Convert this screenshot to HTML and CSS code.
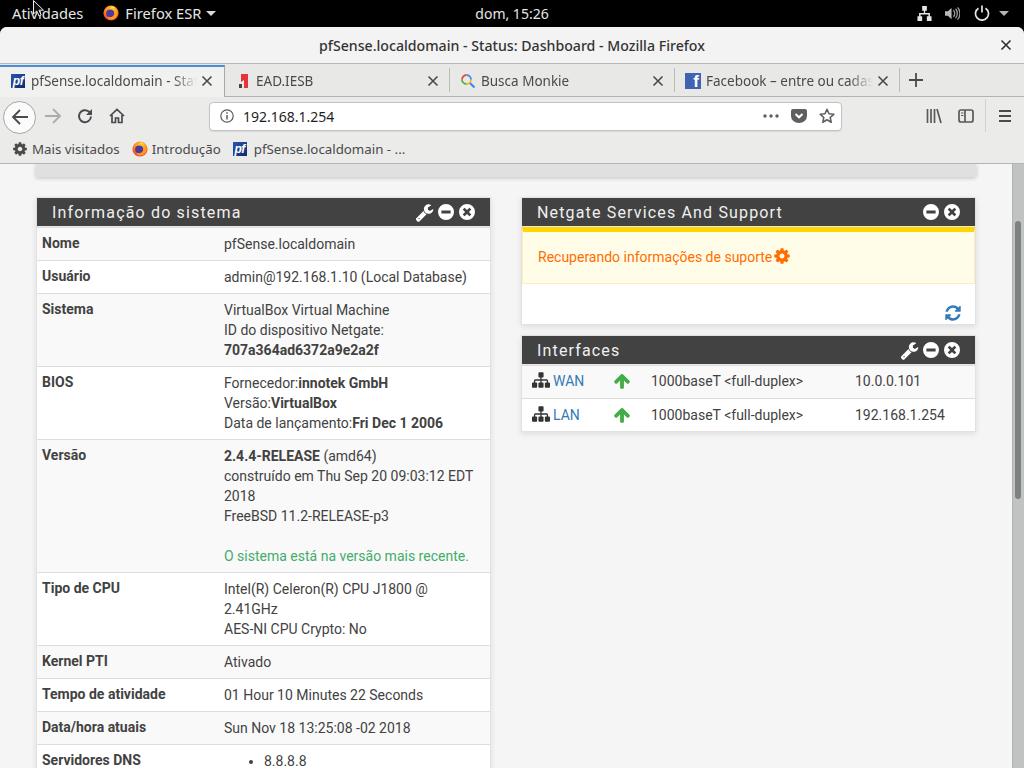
FILE: index.html
```html
<!DOCTYPE html>
<html lang="pt-BR">
<head>
<meta charset="utf-8">
<title>pfSense.localdomain - Status: Dashboard - Mozilla Firefox</title>
<link rel="stylesheet" href="styles.css">
</head>
<body>
<svg class="defs" width="0" height="0" aria-hidden="true">
  <defs>
    <radialGradient id="fxg" cx="0.55" cy="0.3" r="0.8">
      <stop offset="0" stop-color="#ffd83a"/><stop offset="0.5" stop-color="#ff8a1e"/><stop offset="1" stop-color="#e0242d"/>
    </radialGradient>
    <symbol id="fx" viewBox="0 0 16 16">
      <circle cx="8" cy="8" r="7.6" fill="url(#fxg)"/>
      <circle cx="7.2" cy="8.6" r="4.1" fill="#4b3a9c"/>
      <path d="M4.2 11.5c2.5 1.5 6 .8 7-2.2.4-1.4 0-2.8-1-3.8 2.3.6 3.8 2.3 3.8 4.4-.6 2.7-3 4.7-5.8 4.7-1.9 0-3.2-1-4-3.1z" fill="#ff9a1f"/>
      <path d="M8 1.2c2 .2 3.6 1.2 4.6 2.6-1.4-.8-3-.9-4.2-.5z" fill="#ffe14d"/>
    </symbol>
    <symbol id="wrench" viewBox="0 0 1792 1792"><path d="M448 1472q0-26-19-45t-45-19-45 19-19 45 19 45 45 19 45-19 19-45zm644-420l-682 682q-37 37-90 37-52 0-91-37l-106-108q-38-36-38-90 0-53 38-91l681-681q39 98 114.5 173.5t173.5 114.5zm634-435q0 39-23 106-47 134-164.5 217.5t-258.5 83.5q-185 0-316.5-131.5t-131.5-316.5 131.5-316.5 316.5-131.5q58 0 121.5 16.5t107.5 46.5q16 11 16 28t-16 28l-293 169v224l193 107q5-3 79-48.5t135.5-81 70.5-35.5q15 0 23.5 10t8.5 25z"/></symbol>
    <symbol id="minus" viewBox="0 0 16 16"><path fill-rule="evenodd" d="M8 0a8 8 0 1 1 0 16A8 8 0 0 1 8 0zM3.4 6.5v3h9.2v-3z"/></symbol>
    <symbol id="times" viewBox="0 0 16 16"><path fill-rule="evenodd" d="M8 0a8 8 0 1 1 0 16A8 8 0 0 1 8 0zM5.6 3.7 3.7 5.6 6.1 8l-2.4 2.4 1.9 1.9L8 9.9l2.4 2.4 1.9-1.9L9.9 8l2.4-2.4-1.9-1.9L8 6.1z"/></symbol>
    <symbol id="refresh" viewBox="0 0 1792 1792"><path d="M1639 1056q0 5-1 7-64 268-268 434.5t-478 166.5q-146 0-282.5-55t-243.5-157l-129 129q-19 19-45 19t-45-19-19-45v-448q0-26 19-45t45-19h448q26 0 45 19t19 45-19 45l-137 137q71 66 161 102t187 36q134 0 250-65t186-179q11-17 53-117 8-23 30-23h192q13 0 22.5 9.5t9.5 22.5zm25-800v448q0 26-19 45t-45 19h-448q-26 0-45-19t-19-45 19-45l138-138q-148-137-349-137-134 0-250 65t-186 179q-11 17-53 117-8 23-30 23h-199q-13 0-22.5-9.5t-9.5-22.5v-7q65-268 270-434.5t480-166.5q146 0 284 55.5t245 156.5l130-129q19-19 45-19t45 19 19 45z"/></symbol>
    <symbol id="sitemap" viewBox="0 0 1792 1792"><path d="M1792 1248v320q0 40-28 68t-68 28h-320q-40 0-68-28t-28-68v-320q0-40 28-68t68-28h96v-192h-512v192h96q40 0 68 28t28 68v320q0 40-28 68t-68 28h-320q-40 0-68-28t-28-68v-320q0-40 28-68t68-28h96v-192h-512v192h96q40 0 68 28t28 68v320q0 40-28 68t-68 28h-320q-40 0-68-28t-28-68v-320q0-40 28-68t68-28h96v-192q0-52 38-90t90-38h512v-192h-96q-40 0-68-28t-28-68v-320q0-40 28-68t68-28h320q40 0 68 28t28 68v320q0 40-28 68t-68 28h-96v192h512q52 0 90 38t38 90v192h96q40 0 68 28t28 68z"/></symbol>
    <symbol id="arrowup" viewBox="0 0 1792 1792"><path d="M1675 971q0 51-37 90l-75 75q-38 38-91 38-54 0-90-38l-294-293v704q0 52-37.5 84.5t-90.5 32.5h-128q-53 0-90.5-32.5t-37.5-84.5v-704l-294 293q-36 38-90 38t-90-38l-75-75q-38-38-38-90 0-53 38-91l651-651q35-37 90-37 54 0 91 37l651 651q37 39 37 91z"/></symbol>
    <symbol id="cog" viewBox="0 0 1792 1792"><path d="M1152 896q0-106-75-181t-181-75-181 75-75 181 75 181 181 75 181-75 75-181zm512-109v222q0 12-8 23t-20 13l-185 28q-19 54-39 91 35 50 107 138 10 12 10 25t-9 23q-27 37-99 108t-94 71q-12 0-26-9l-138-108q-44 23-91 38-16 136-29 186-7 28-36 28h-222q-14 0-24.5-8.5t-11.5-21.5l-28-184q-49-16-90-37l-141 107q-10 9-25 9-14 0-25-11-126-114-165-168-7-10-7-23 0-12 8-23 15-21 51-66.5t54-70.5q-27-50-41-99l-183-27q-13-2-21-12.5t-8-23.5v-222q0-12 8-23t19-13l186-28q14-46 39-92-40-57-107-138-10-12-10-24 0-10 9-23 26-36 98.5-107.5t94.5-71.5q13 0 26 10l138 107q44-23 91-38 16-136 29-186 7-28 36-28h222q14 0 24.5 8.5t11.5 21.5l28 184q49 16 90 37l142-107q9-9 24-9 13 0 25 10 129 119 165 170 7 8 7 22 0 12-8 23-15 21-51 66.5t-54 70.5q26 50 41 98l183 28q13 2 21 12.5t8 23.5z"/></symbol>
    <symbol id="close" viewBox="0 0 12 12"><path d="M1.5 1.5l9 9M10.5 1.5l-9 9" fill="none" stroke="currentColor" stroke-width="1.6"/></symbol>
  </defs>
</svg>

<header class="topbar">
  <div class="top-left">
    <span class="top-label">Atividades</span>
    <span class="top-app">
      <svg class="ic16"><use href="#fx"/></svg>
      <span class="top-label">Firefox ESR</span>
      <span class="caret"></span>
    </span>
  </div>
  <span class="clock">dom, 15:26</span>
  <div class="top-right">
    <svg class="net" viewBox="0 0 16 16"><path d="M5.5 0h5v5H8.700v2.500h5.100V11H15.500v5h-5v-5h1.700V9H3.800v2h1.700v5h-5v-5h1.700V7.500h5.100V5H5.500z" fill="#e6e6e6"/></svg>
    <svg class="vol" viewBox="0 0 16 16"><path d="M0 5.500h3L7 2v12l-4-3.500H0z" fill="#b9b9b9"/><path d="M9 4.500c1.800 1.800 1.800 5.200 0 7M11.200 3c2.600 2.600 2.600 7.400 0 10M13.400 1.500c3.400 3.500 3.400 9.500 0 13" fill="none" stroke="#9a9a9a" stroke-width="1.400"/></svg>
    <svg class="pow" viewBox="0 0 16 16"><path d="M4.500 3.200a6.500 6.500 0 1 0 7 0M8 .5v7" fill="none" stroke="#e6e6e6" stroke-width="1.700"/></svg>
    <span class="caret caret-dim"></span>
  </div>
</header>

<div class="window">
  <div class="titlebar">
    <span class="title">pfSense.localdomain - Status: Dashboard - Mozilla Firefox</span>
    <svg class="win-close"><use href="#close"/></svg>
  </div>

  <div class="tabs">
    <div class="tab tab-active">
      <span class="fav"><span class="pf">pf</span></span>
      <span class="tab-label">pfSense.localdomain - Status</span>
      <svg class="tab-close"><use href="#close"/></svg>
    </div>
    <div class="tab">
      <span class="fav"><svg class="ic16" viewBox="0 0 16 16"><path d="M6 1h7v14H9V7L6 9z" fill="#e4343f"/><rect x="4" y="11" width="3" height="4" fill="#444"/></svg></span>
      <span class="tab-label">EAD.IESB</span>
      <svg class="tab-close"><use href="#close"/></svg>
    </div>
    <div class="tab">
      <span class="fav"><svg class="ic16" viewBox="0 0 16 16"><path d="M6.500 2a4.500 4.500 0 0 0-4.500 4.500" fill="none" stroke="#e8453c" stroke-width="1.800"/><path d="M2 6.500A4.500 4.500 0 0 0 6.500 11" fill="none" stroke="#4caf50" stroke-width="1.800"/><path d="M6.500 11A4.500 4.500 0 0 0 11 6.500" fill="none" stroke="#fbbc05" stroke-width="1.800"/><path d="M11 6.500A4.500 4.500 0 0 0 6.500 2" fill="none" stroke="#4285f4" stroke-width="1.800"/><path d="M10 10l4.500 4.500" stroke="#4285f4" stroke-width="2.200"/></svg></span>
      <span class="tab-label">Busca Monkie</span>
      <svg class="tab-close"><use href="#close"/></svg>
    </div>
    <div class="tab">
      <span class="fav fav-fb"><span class="fb">f</span></span>
      <span class="tab-label">Facebook – entre ou cadastre-se</span>
      <svg class="tab-close"><use href="#close"/></svg>
    </div>
    <svg class="newtab" viewBox="0 0 14 14"><path d="M7 0v14M0 7h14" stroke="#4a4a4a" stroke-width="1.800"/></svg>
  </div>

  <nav class="navbar">
    <span class="btn btn-back"><svg class="ic18" viewBox="0 0 18 18"><path d="M17 9H2M9 2 2 9l7 7" fill="none" stroke="#4a4a4f" stroke-width="1.800"/></svg></span>
    <span class="btn"><svg class="ic18" viewBox="0 0 18 18"><path d="M1 9h15M9 2l7 7-7 7" fill="none" stroke="#acacac" stroke-width="1.800"/></svg></span>
    <span class="btn"><svg class="ic16" viewBox="0 0 16 16"><path d="M14 8.500A6 6 0 1 1 11.800 3.500L14 5.500" fill="none" stroke="#4a4a4f" stroke-width="2"/><path d="M15 1v6H9z" fill="#4a4a4f"/></svg></span>
    <span class="btn"><svg class="ic16" viewBox="0 0 16 16"><path d="M1 8 8 1.500 15 8M3 7v7.500h3.500V10h3v4.500H13V7" fill="none" stroke="#4a4a4f" stroke-width="1.700"/></svg></span>
    <div class="urlbar">
      <svg class="ic14" viewBox="0 0 14 14"><circle cx="7" cy="7" r="6.200" fill="none" stroke="#5a5a5a" stroke-width="1.200"/><path d="M7 6v4.500M7 3.200v1.500" stroke="#5a5a5a" stroke-width="1.500"/></svg>
      <span class="url">192.168.1.254</span>
      <div class="url-actions">
        <svg class="dots" viewBox="0 0 16 4"><circle cx="2" cy="2" r="1.700"/><circle cx="8" cy="2" r="1.700"/><circle cx="14" cy="2" r="1.700"/></svg>
        <svg class="ic16" viewBox="0 0 16 16"><path d="M2 1h12a2 2 0 0 1 2 2v5a8 7 0 0 1-16 0V3a2 2 0 0 1 2-2z" fill="#5f5f5f"/><path d="M4.500 6 8 9.300 11.500 6" fill="none" stroke="#fff" stroke-width="2"/></svg>
        <svg class="ic16" viewBox="0 0 16 16"><path d="M8 1.300l2 4.500 4.800.5-3.600 3.200 1 4.800L8 11.800l-4.200 2.500 1-4.800L1.200 6.300 6 5.800z" fill="none" stroke="#5f5f5f" stroke-width="1.600" stroke-linejoin="round"/></svg>
      </div>
    </div>
    <div class="nav-right">
      <span class="btn"><svg class="ic16" viewBox="0 0 16 16"><path d="M1.500 1v14M5 1v14M8.500 1v14M11 1l4 14" fill="none" stroke="#5a5a5a" stroke-width="1.700"/></svg></span>
      <span class="btn"><svg class="ic16" viewBox="0 0 16 16"><rect x="1" y="2" width="14" height="12" rx="2" fill="none" stroke="#5a5a5a" stroke-width="1.700"/><path d="M7 2v12" stroke="#5a5a5a" stroke-width="1.700"/><path d="M3 5h2.500M3 7.500h2.500" stroke="#5a5a5a" stroke-width="1"/></svg></span>
      <span class="nav-sep"></span>
      <span class="btn"><svg class="ic16" viewBox="0 0 16 16"><path d="M2 3h12M2 8h12M2 13h12" stroke="#4a4a4f" stroke-width="1.800"/></svg></span>
    </div>
  </nav>

  <div class="bookmarks">
    <span class="bm bm-gear"><svg class="gear"><use href="#cog"/></svg>Mais visitados</span>
    <span class="bm"><svg class="ic16"><use href="#fx"/></svg>Introdução</span>
    <span class="bm bm-pf"><span class="fav-small"><span class="pf">pf</span></span>pfSense.localdomain - ...</span>
  </div>

  <div class="viewport">
    <main class="page">
      <div class="topcard"></div>
      <div class="columns">
        <section class="panel">
          <div class="panel-head">
            <h2>Informação do sistema</h2>
            <div class="head-icons">
              <svg class="wr"><use href="#wrench"/></svg>
              <svg class="hi"><use href="#minus"/></svg>
              <svg class="hi"><use href="#times"/></svg>
            </div>
          </div>
          <table class="info">
            <tbody>
              <tr><th>Nome</th><td>pfSense.localdomain</td></tr>
              <tr><th>Usuário</th><td>admin@192.168.1.10 (Local Database)</td></tr>
              <tr><th>Sistema</th><td>VirtualBox Virtual Machine<br>ID do dispositivo Netgate:<br><b>707a364ad6372a9e2a2f</b></td></tr>
              <tr><th>BIOS</th><td>Fornecedor:<b>innotek GmbH</b><br>Versão:<b>VirtualBox</b><br>Data de lançamento:<b>Fri Dec 1 2006</b></td></tr>
              <tr><th>Versão</th><td><b>2.4.4-RELEASE</b> (amd64)<br>construído em Thu Sep 20 09:03:12 EDT 2018<br>FreeBSD 11.2-RELEASE-p3<br><br><span class="ok">O sistema está na versão mais recente.</span></td></tr>
              <tr><th>Tipo de CPU</th><td>Intel(R) Celeron(R) CPU J1800 @ 2.41GHz<br>AES-NI CPU Crypto: No</td></tr>
              <tr><th>Kernel PTI</th><td>Ativado</td></tr>
              <tr><th>Tempo de atividade</th><td>01 Hour 10 Minutes 22 Seconds</td></tr>
              <tr><th>Data/hora atuais</th><td>Sun Nov 18 13:25:08 -02 2018</td></tr>
              <tr><th>Servidores DNS</th><td><ul class="dns"><li>8.8.8.8</li><li>8.8.4.4</li></ul></td></tr>
            </tbody>
          </table>
        </section>

        <div class="col-right">
          <section class="panel">
            <div class="panel-head">
              <h2>Netgate Services And Support</h2>
              <div class="head-icons">
                <svg class="hi"><use href="#minus"/></svg>
                <svg class="hi"><use href="#times"/></svg>
              </div>
            </div>
            <div class="alert">Recuperando informações de suporte<svg class="alert-cog"><use href="#cog"/></svg></div>
            <div class="panel-foot"><svg class="refresh"><use href="#refresh"/></svg></div>
          </section>

          <section class="panel">
            <div class="panel-head">
              <h2>Interfaces</h2>
              <div class="head-icons">
                <svg class="wr"><use href="#wrench"/></svg>
                <svg class="hi"><use href="#minus"/></svg>
                <svg class="hi"><use href="#times"/></svg>
              </div>
            </div>
            <table class="ifaces">
              <tbody>
                <tr>
                  <td class="c-name"><svg class="sitemap"><use href="#sitemap"/></svg><a class="link">WAN</a></td>
                  <td class="c-up"><svg class="up"><use href="#arrowup"/></svg></td>
                  <td class="c-media">1000baseT &lt;full-duplex&gt;</td>
                  <td>10.0.0.101</td>
                </tr>
                <tr>
                  <td class="c-name"><svg class="sitemap"><use href="#sitemap"/></svg><a class="link">LAN</a></td>
                  <td class="c-up"><svg class="up"><use href="#arrowup"/></svg></td>
                  <td class="c-media">1000baseT &lt;full-duplex&gt;</td>
                  <td>192.168.1.254</td>
                </tr>
              </tbody>
            </table>
          </section>
        </div>
      </div>
    </main>
    <div class="scrollbar"><span class="thumb"></span></div>
  </div>
</div>

<svg class="cursor" viewBox="0 0 12 17"><path d="M.5.5v13.500l3.200-3 2.300 5 2.200-1-2.200-4.800h4.500z" fill="#111" stroke="#eee" stroke-width="1"/></svg>
</body>
</html>
```

FILE: styles.css
```css
* { box-sizing: border-box; }
html, body { margin: 0; height: 100%; }
body {
  position: relative;
  display: flex;
  flex-direction: column;
  width: 1024px;
  height: 768px;
  overflow: hidden;
  background: #000;
  font-family: "Noto Sans", "Liberation Sans", sans-serif;
  font-size: 14px;
  color: #3d3d3d;
}
.defs { position: absolute; }
svg { display: block; flex: none; }
.ic14 { width: 14px; height: 14px; }
.ic16 { width: 16px; height: 16px; }
.ic18 { width: 18px; height: 18px; }

/* GNOME top bar */
.topbar {
  position: relative;
  flex: none;
  display: flex;
  align-items: center;
  justify-content: space-between;
  height: 27px;
  padding: 0 15px 1px 12px;
  background: #000;
  color: #e6e6e6;
}
.top-left { display: flex; align-items: center; gap: 20px; }
.top-app { display: flex; align-items: center; gap: 6px; }
.top-label { font-size: 14.7px; line-height: 19px; }
.caret {
  width: 0;
  height: 0;
  border: 5px solid transparent;
  border-top: 5px solid #d8d8d8;
  border-bottom: 0;
}
.top-app .caret { margin-left: -1px; }
.caret-dim { border-top-color: #b5b5b5; }
.clock { position: absolute; left: 0; right: 0; text-align: center; }
.top-right { display: flex; align-items: center; }
.net { width: 15px; height: 15px; margin-right: 13px; }
.vol { width: 15px; height: 15px; margin-right: 14px; }
.pow { width: 16px; height: 16px; margin-right: 9px; }

/* Firefox window */
.window {
  flex: 1;
  min-height: 0;
  display: flex;
  flex-direction: column;
  border-radius: 7px 7px 0 0;
  overflow: hidden;
  background: #f2f2f2;
}
.titlebar {
  position: relative;
  flex: none;
  display: flex;
  align-items: center;
  justify-content: center;
  height: 37px;
  border-bottom: 1px solid #b7b7b5;
  background: #f3f3f3;
}
.title { font-weight: 500; font-size: 14.15px; color: #333; }
.win-close {
  position: absolute;
  right: 12px;
  top: 12px;
  width: 12px;
  height: 12px;
  color: #2e2e2e;
}
.tabs {
  flex: none;
  display: flex;
  align-items: flex-end;
  height: 33px;
  border-bottom: 1px solid #b3b3b1;
  background: #e8e8e7;
  font-size: 13.5px;
}
.tab {
  position: relative;
  flex: none;
  display: flex;
  align-items: center;
  width: 225px;
  height: 32px;
  padding: 2px 11px 0 10px;
  color: #4a4a4a;
}
.tab::after {
  content: "";
  position: absolute;
  right: 0;
  top: 4px;
  bottom: 4px;
  width: 1px;
  background: #bcbcba;
}
.tab-active {
  margin-bottom: -1px;
  padding-top: 0;
  padding-bottom: 2px;
  background: #f1f1f0;
  border-top: 2px solid #4a90d9;
  border-right: 1px solid #a8a8a6;
}
.tab-active::after { display: none; }
.fav {
  flex: none;
  display: flex;
  align-items: center;
  justify-content: center;
  width: 16px;
  height: 16px;
  margin-right: 5px;
}
.pf {
  display: block;
  width: 14px;
  height: 14px;
  background: linear-gradient(135deg, #2a56b0, #0f2a70);
  color: #fff;
  font-family: "Liberation Sans", sans-serif;
  font-style: italic;
  font-weight: 700;
  font-size: 12px;
  line-height: 14px;
  text-align: center;
  letter-spacing: -0.5px;
}
.fav-fb { background: #3f63b0; overflow: hidden; align-items: flex-end; justify-content: flex-end; }
.fb {
  padding-right: 2px;
  color: #fff;
  font-family: "Liberation Sans", sans-serif;
  font-weight: 700;
  font-size: 17px;
  line-height: 15px;
}
.tab-label {
  flex: 1;
  min-width: 0;
  overflow: hidden;
  white-space: nowrap;
  -webkit-mask-image: linear-gradient(to right, #000 calc(100% - 28px), transparent calc(100% - 4px));
  mask-image: linear-gradient(to right, #000 calc(100% - 28px), transparent calc(100% - 4px));
}
.tab-close { width: 12px; height: 12px; color: #4a4a4a; }
.newtab { width: 14px; height: 14px; margin: 0 0 9px 9px; }

.navbar {
  flex: none;
  display: flex;
  align-items: center;
  height: 37px;
  padding-left: 3px;
  background: #ebebea;
}
.btn {
  flex: none;
  display: flex;
  align-items: center;
  justify-content: center;
  width: 32px;
  height: 32px;
}
.btn-back {
  width: 33px;
  height: 33px;
  margin: 3px 1px 0 0;
  border: 1px solid #a5a5a5;
  border-radius: 50%;
  background: #fbfbfb;
}
.urlbar {
  flex: none;
  display: flex;
  align-items: center;
  width: 633px;
  height: 29px;
  margin: 1px 0 0 76px;
  padding: 0 6px 0 10px;
  border: 1px solid #c2c2c0;
  border-radius: 4px;
  background: #fff;
  box-shadow: 0 1px 1px rgba(0,0,0,.08);
}
.url { margin-left: 9px; color: #1f1f1f; }
.url-actions { margin-left: auto; display: flex; align-items: center; gap: 12px; }
.dots { width: 16px; height: 4px; fill: #5f5f5f; }
.nav-right { margin-left: auto; display: flex; align-items: center; padding-right: 3px; }
.nav-sep { width: 1px; height: 33px; margin: 0 3px; background: #d2d2d0; }

.bookmarks {
  flex: none;
  display: flex;
  align-items: center;
  gap: 12px;
  height: 30px;
  padding: 1px 0 0 12px;
  border-bottom: 1px solid #b3b3b1;
  background: #ebebea;
  color: #4a4a4a;
  font-size: 13.3px;
}
.bm { display: flex; align-items: center; gap: 4px; white-space: nowrap; }
.bm-gear { gap: 4px; }
.bm-pf { gap: 7px; }
.gear { width: 16px; height: 16px; fill: #4a4a4a; }
.fav-small { display: block; }

/* pfSense dashboard */
.viewport { flex: 1; min-height: 0; display: flex; overflow: hidden; background: #f5f5f5; }
.page {
  flex: 1;
  min-width: 0;
  padding: 0 36px;
  font-family: Roboto, "Liberation Sans", sans-serif;
  font-size: 14px;
  line-height: 20px;
  color: #424242;
}
.topcard {
  height: 13px;
  background: #e0e0e0;
  box-shadow: 0 1px 4px rgba(0,0,0,.22);
}
.columns {
  display: flex;
  align-items: flex-start;
  gap: 30px;
  margin-top: 20px;
}
.columns > * { flex: none; width: 455px; }
.col-right { display: flex; flex-direction: column; gap: 10px; }
.panel {
  border: 1px solid #e2e2e2;
  background: #fff;
  box-shadow: 0 2px 6px rgba(0,0,0,.1);
}
.panel-head {
  display: flex;
  align-items: center;
  justify-content: space-between;
  height: 29px;
  padding: 0 15px;
  border-bottom: 1px solid #e8e8e8;
  background: #424242;
  color: #fff;
}
.panel-head h2 {
  margin: 1px 0 0;
  font-size: 16px;
  font-weight: 400;
  letter-spacing: 1.16px;
  color: #f0f0f0;
}
.head-icons { display: flex; align-items: center; gap: 5px; }
.hi { width: 16px; height: 16px; fill: #fff; }
.wr { width: 19px; height: 19px; margin-right: -1px; fill: #fff; }

.info, .ifaces { width: 100%; border-collapse: separate; border-spacing: 0; table-layout: fixed; }
.info th, .info td {
  padding: 6px;
  border-top: 1px solid #ddd;
  vertical-align: top;
  text-align: left;
}
.info th { width: 181px; padding: 5px 6px 7px 5px; font-weight: 700; }
.info tr:nth-child(odd), .ifaces tr:nth-child(odd) { background: #f9f9f9; }
.ok { color: #43ac6a; }
.dns { margin: 0; padding-left: 40px; }

.alert {
  height: 57px;
  padding: 15px 15px 0;
  border: 1px solid #ffeeba;
  border-top: 5px solid #ffd600;
  background: #fffde7;
  color: #ff6d00;
  display: flex;
  align-items: flex-start;
}
.alert-cog { width: 18px; height: 18px; margin: 0 0 0 1px; fill: #ff6d00; }
.panel-foot {
  display: flex;
  justify-content: flex-end;
  height: 40px;
  padding: 20px 13px 0 0;
}
.refresh { width: 18px; height: 18px; fill: #337ab7; }

.ifaces td {
  padding: 6px 10px;
  border-top: 1px solid #ddd;
  white-space: nowrap;
}
.ifaces tr:first-child td { padding: 5px 10px 7px; }
.c-name { width: 81px; }
.c-up { width: 38px; }
.c-media { width: 204px; }
.sitemap { display: inline-block; vertical-align: -3px; width: 18px; height: 18px; margin-right: 3px; fill: #333; }
.link { color: #337ab7; }
.up { width: 18px; height: 18px; fill: #43ac47; }

.scrollbar {
  position: relative;
  flex: none;
  width: 12px;
  border-left: 1px solid #b3b3b1;
  background: #c1c2c2;
}
.thumb {
  position: absolute;
  left: 2px;
  top: 57px;
  width: 6px;
  height: 278px;
  border-radius: 3px;
  background: #7d8181;
}
.cursor { position: absolute; left: 33px; top: 0; width: 12px; height: 17px; }
```
